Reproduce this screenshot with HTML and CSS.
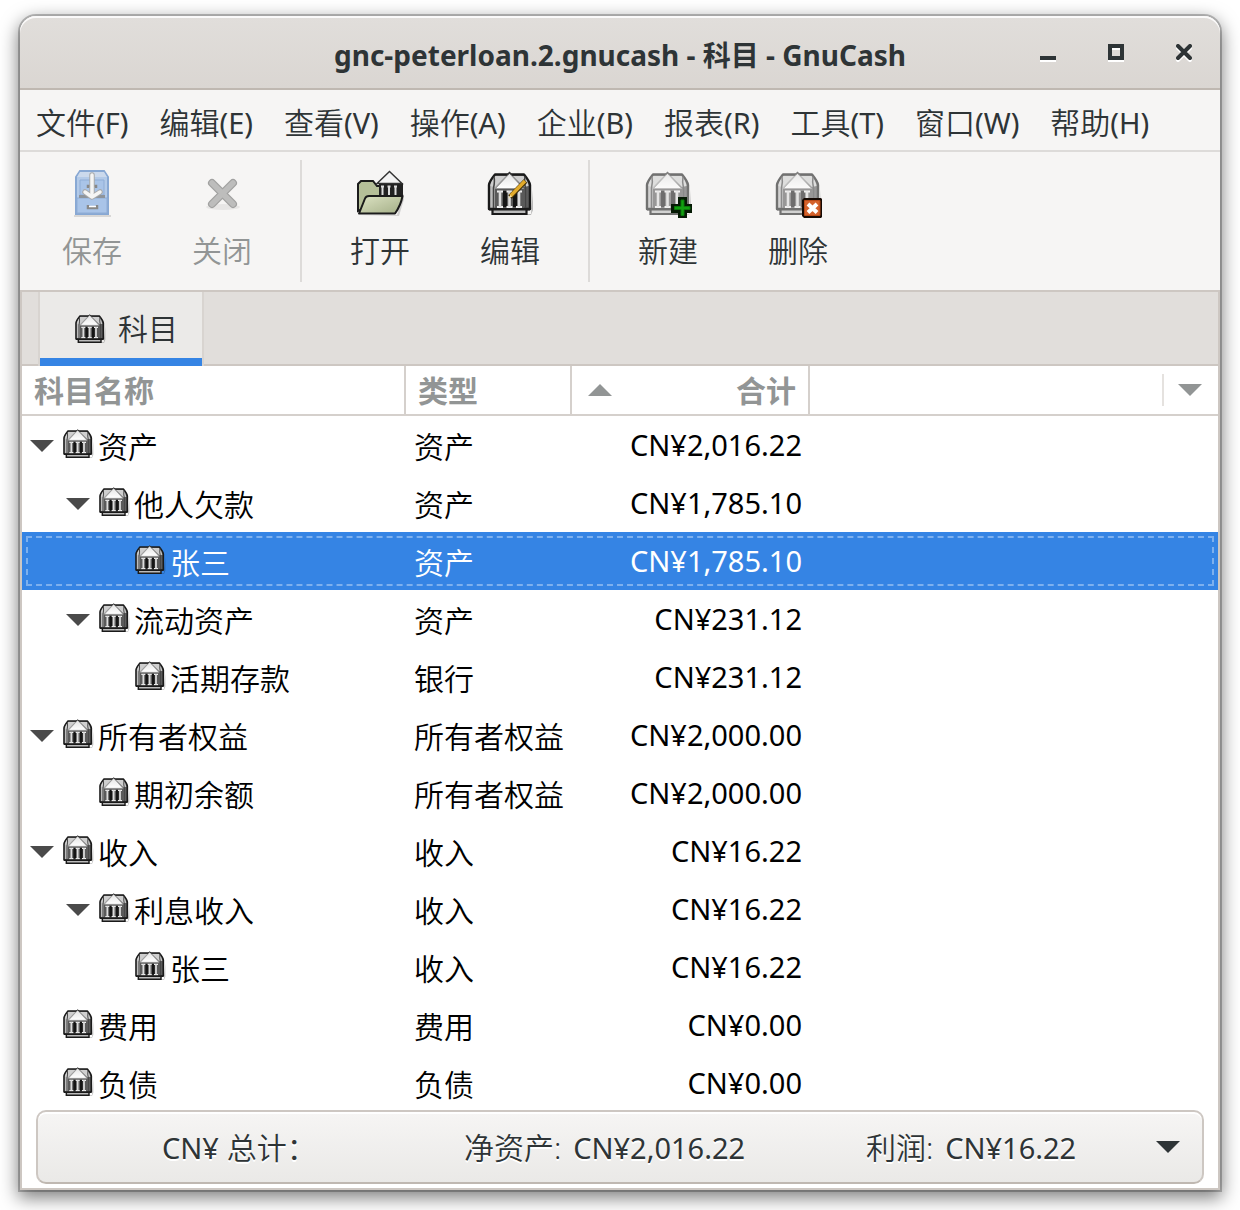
FILE: index.html
```html
<!DOCTYPE html>
<html lang="zh-CN">
<head>
<meta charset="utf-8">
<title>gnc-peterloan.2.gnucash - 科目 - GnuCash</title>
<link rel="stylesheet" href="styles.css">
</head>
<body>
<svg class="defs" aria-hidden="true">
  <defs>
    <linearGradient id="steel" x1="0" x2="1" y1="0" y2="0">
      <stop offset="0" stop-color="#c8c8c8"/><stop offset=".3" stop-color="#8a8a8a"/><stop offset="1" stop-color="#585858"/>
    </linearGradient>
    <linearGradient id="roof" x1="0" x2="0" y1="0" y2="1">
      <stop offset="0" stop-color="#e4e4e4"/><stop offset="1" stop-color="#fff"/>
    </linearGradient>
    <linearGradient id="folder" x1="0" x2="1" y1="0" y2="1">
      <stop offset="0" stop-color="#dde3c4"/><stop offset="1" stop-color="#a3ae86"/>
    </linearGradient>
    <symbol id="bank" viewBox="0 0 48 48">
      <path d="M4 45h41l2-5v-20l-2 24z" fill="#000" opacity=".25"/>
      <path d="M3 39V15Q3 12 9 4.500H38Q44 12 44 15V39z" fill="url(#steel)" stroke="#1a1a1a" stroke-width="2.400" stroke-linejoin="round"/>
      <path d="M9.500 6Q5 11 4.500 16L9 17 20 6zM37.500 6Q42 11 42.500 16L38 17 27 6z" fill="#cfcfcf"/>
      <path d="M8 6.500Q9 12 7.500 18V38M39 6.500Q38 12 39.500 18V38" fill="none" stroke="#444" stroke-width="1.500"/>
      <path d="M9 18H38V38H9z" fill="#5a5a5a"/>
      <path d="M17 21h4v16h-4zM27 21h4v16h-4z" fill="#141414"/>
      <path d="M9.500 18.500 23.500 3.500 37.500 18.500z" fill="url(#roof)" stroke="#999" stroke-width="1"/>
      <path d="M11 21.500h6M20.500 21.500h6M30 21.500h6M11 37h6M20.500 37h6M30 37h6" stroke="#f0f0f0" stroke-width="1.800"/>
      <path d="M14 21v16M23.500 21v16M33 21v16" stroke="#dcdcdc" stroke-width="2.600"/>
      <path d="M3 39.500H44M6.500 40v4H40.500V40" fill="#bbb" stroke="#1a1a1a" stroke-width="2.200"/>
      <path d="M21 5 23.500 2.500 26 5" fill="none" stroke="#333" stroke-width="1.500"/>
    </symbol>
  </defs>
</svg>

<main class="window">
  <header class="titlebar">
    <h1>gnc-peterloan.2.gnucash - 科目 - GnuCash</h1>
    <div class="controls">
      <button type="button" aria-label="最小化"><svg viewBox="0 0 16 18"><path d="M0 14h16v4H0z" fill="#fff"/><path d="M0 12h16v4H0z" fill="#2e3436"/></svg></button>
      <button type="button" aria-label="最大化"><svg viewBox="0 0 16 18"><path d="M2 4h12v12H2z" fill="none" stroke="#fff" stroke-width="4"/><path d="M2 2h12v12H2z" fill="none" stroke="#2e3436" stroke-width="4"/></svg></button>
      <button type="button" aria-label="关闭窗口"><svg viewBox="0 0 16 18"><path d="M2 4l12 12M14 4L2 16" stroke="#fff" stroke-width="4" stroke-linecap="square"/><path d="M2 2l12 12M14 2L2 14" stroke="#2e3436" stroke-width="4" stroke-linecap="round"/></svg></button>
    </div>
  </header>

  <nav class="menubar">
    <button type="button">文件<span class="latin">(F)</span></button>
    <button type="button">编辑<span class="latin">(E)</span></button>
    <button type="button">查看<span class="latin">(V)</span></button>
    <button type="button">操作<span class="latin">(A)</span></button>
    <button type="button">企业<span class="latin">(B)</span></button>
    <button type="button">报表<span class="latin">(R)</span></button>
    <button type="button">工具<span class="latin">(T)</span></button>
    <button type="button">窗口<span class="latin">(W)</span></button>
    <button type="button">帮助<span class="latin">(H)</span></button>
  </nav>

  <div class="toolbar" role="toolbar">
    <button type="button" disabled>
      <svg viewBox="0 0 48 48">
        <path d="M6 45h37v2H6z" fill="#000" opacity=".12"/>
        <path d="M8 7l4-6h24l4 6v37H8z" fill="#b3cae8" stroke="#88a8d3" stroke-width="2"/>
        <path d="M9 7l3-5h24l3 5z" fill="#cbd9ec"/>
        <path d="M12 10h24v15H12zM9 28h30v15H9z" fill="#a9c4e8" stroke="#8fadd6"/>
        <path d="M11 25h26v3H11z" fill="#8e949b"/>
        <path d="M20 18v-2h8v2M20 35v3h9v-3" fill="none" stroke="#888" stroke-width="2.500"/>
        <path d="M21 36.500h7" stroke="#fff" stroke-width="1.500"/>
        <path d="M24 5v18M17 22l7 5 8-5" fill="none" stroke="#a9aaab" stroke-width="5.500" stroke-linecap="round" stroke-linejoin="round"/>
        <path d="M24 5v18M17 22l7 5 8-5" fill="none" stroke="#f5f5f4" stroke-width="3.500" stroke-linecap="round" stroke-linejoin="round"/>
      </svg>
      <span>保存</span>
    </button>
    <button type="button" disabled>
      <svg viewBox="0 0 48 48">
        <ellipse cx="25" cy="37" rx="17" ry="3" fill="#000" opacity=".06"/>
        <path d="M14 13l21 21M35 13L14 34" stroke="#a1a1a0" stroke-width="8" stroke-linecap="round"/>
        <path d="M14 13l21 21M35 13L14 34" stroke="#bdbdbc" stroke-width="5.500" stroke-linecap="round"/>
      </svg>
      <span>关闭</span>
    </button>
    <hr>
    <button type="button">
      <svg viewBox="0 0 48 48">
        <path d="M3 45h38l6-19v-2l2 2-6 20z" fill="#000" opacity=".15"/>
        <path d="M2 41V14l3-3h12l4 5h5v15z" fill="#b5bf98" stroke="#1b1b1b" stroke-width="2"/>
        <path d="M23 13h24v15H23z" fill="#222"/>
        <path d="M21 13.500 33.500 1.500 46 13.500z" fill="#f4f4f4" stroke="#333" stroke-width="1.500"/>
        <path d="M26.500 16v9M33 16v9M39.500 16v9M25 16.500h3M31.500 16.500h3M38 16.500h3" stroke="#ddd" stroke-width="2"/>
        <path d="M3 43.500 9 28.500Q10 26 13 26H46.500Q45 35 39 43.500z" fill="url(#folder)" stroke="#1b1b1b" stroke-width="2" stroke-linejoin="round"/>
      </svg>
      <span>打开</span>
    </button>
    <button type="button">
      <svg viewBox="0 0 48 48">
        <use href="#bank" width="48" height="48"/>
        <path d="M24 27 39.500 11" stroke="#3b2b08" stroke-width="5"/>
        <path d="M24.500 26 39 11" stroke="#e2ab2c" stroke-width="3.500"/>
        <path d="M22 28.500l2.500-3.500 1.500 1.500z" fill="#fbe3a0"/>
      </svg>
      <span>编辑</span>
    </button>
    <hr>
    <button type="button">
      <svg viewBox="0 0 48 48">
        <use href="#bank" width="48" height="48" opacity=".6"/>
        <path d="M34 27h9v7h6v9h-6v6h-9v-6h-7v-9h7z" fill="#051a04"/>
        <path d="M37 30h3v6.500h6v3h-6v6h-3v-6h-6.500v-3H37z" fill="#12a010" stroke="#0a7a0a"/>
      </svg>
      <span>新建</span>
    </button>
    <button type="button">
      <svg viewBox="0 0 48 48">
        <use href="#bank" width="48" height="48" opacity=".6"/>
        <path d="M28 30l2-2h17l2 2v16l-2 2H30l-2-2z" fill="#160a04"/>
        <path d="M30.500 30.500h15.500v15H30.500z" fill="#d4622c" stroke="#b84a17"/>
        <path d="M34 34l9 8.500M43 34l-9 8.500" stroke="#fff" stroke-width="4"/>
      </svg>
      <span>删除</span>
    </button>
  </div>

  <section class="notebook">
    <div class="tabs" role="tablist">
      <button type="button" class="tab" role="tab" aria-selected="true"><svg class="bank"><use href="#bank"/></svg><span>科目</span></button>
    </div>

    <table class="tree">
      <colgroup><col class="c-name"><col class="c-type"><col class="c-total"><col></colgroup>
      <thead>
        <tr>
          <th scope="col">科目名称</th>
          <th scope="col">类型</th>
          <th scope="col"><div class="sorted"><svg class="arrow" viewBox="0 0 24 12"><path d="M0 12 12 0 24 12z"/></svg><span>合计</span></div></th>
          <th class="more"><button type="button" aria-label="选择列"><svg class="arrow" viewBox="0 0 24 12"><path d="M0 0h24L12 12z"/></svg></button></th>
        </tr>
      </thead>
      <tbody>
        <tr><td><div class="account"><svg class="arrow" viewBox="0 0 24 12"><path d="M0 0h24L12 12z"/></svg><svg class="bank"><use href="#bank"/></svg><span>资产</span></div></td><td>资产</td><td class="num">CN¥2,016.22</td><td></td></tr>
        <tr><td><div class="account level-1"><svg class="arrow" viewBox="0 0 24 12"><path d="M0 0h24L12 12z"/></svg><svg class="bank"><use href="#bank"/></svg><span>他人欠款</span></div></td><td>资产</td><td class="num">CN¥1,785.10</td><td></td></tr>
        <tr class="selected"><td><div class="account level-2"><i class="arrow"></i><svg class="bank"><use href="#bank"/></svg><span>张三</span></div></td><td>资产</td><td class="num">CN¥1,785.10</td><td></td></tr>
        <tr><td><div class="account level-1"><svg class="arrow" viewBox="0 0 24 12"><path d="M0 0h24L12 12z"/></svg><svg class="bank"><use href="#bank"/></svg><span>流动资产</span></div></td><td>资产</td><td class="num">CN¥231.12</td><td></td></tr>
        <tr><td><div class="account level-2"><i class="arrow"></i><svg class="bank"><use href="#bank"/></svg><span>活期存款</span></div></td><td>银行</td><td class="num">CN¥231.12</td><td></td></tr>
        <tr><td><div class="account"><svg class="arrow" viewBox="0 0 24 12"><path d="M0 0h24L12 12z"/></svg><svg class="bank"><use href="#bank"/></svg><span>所有者权益</span></div></td><td>所有者权益</td><td class="num">CN¥2,000.00</td><td></td></tr>
        <tr><td><div class="account level-1"><i class="arrow"></i><svg class="bank"><use href="#bank"/></svg><span>期初余额</span></div></td><td>所有者权益</td><td class="num">CN¥2,000.00</td><td></td></tr>
        <tr><td><div class="account"><svg class="arrow" viewBox="0 0 24 12"><path d="M0 0h24L12 12z"/></svg><svg class="bank"><use href="#bank"/></svg><span>收入</span></div></td><td>收入</td><td class="num">CN¥16.22</td><td></td></tr>
        <tr><td><div class="account level-1"><svg class="arrow" viewBox="0 0 24 12"><path d="M0 0h24L12 12z"/></svg><svg class="bank"><use href="#bank"/></svg><span>利息收入</span></div></td><td>收入</td><td class="num">CN¥16.22</td><td></td></tr>
        <tr><td><div class="account level-2"><i class="arrow"></i><svg class="bank"><use href="#bank"/></svg><span>张三</span></div></td><td>收入</td><td class="num">CN¥16.22</td><td></td></tr>
        <tr><td><div class="account"><i class="arrow"></i><svg class="bank"><use href="#bank"/></svg><span>费用</span></div></td><td>费用</td><td class="num">CN¥0.00</td><td></td></tr>
        <tr><td><div class="account"><i class="arrow"></i><svg class="bank"><use href="#bank"/></svg><span>负债</span></div></td><td>负债</td><td class="num">CN¥0.00</td><td></td></tr>
      </tbody>
    </table>

    <button type="button" class="summary">
      <span><span class="latin">CN¥</span> 总计：</span>
      <span>净资产: <span class="latin amount">CN¥2,016.22</span></span>
      <span>利润: <span class="latin amount">CN¥16.22</span></span>
      <svg class="arrow" viewBox="0 0 24 12"><path d="M0 0h24L12 12z"/></svg>
    </button>
  </section>
</main>
</body>
</html>
```
FILE: styles.css
```css
* { box-sizing: border-box; }

body {
  margin: 0;
  min-height: 100vh;
  padding: 16px 20px 20px;
  display: flex;
  background: #fff;
  color: #2e3436;
  font: 350 30px/40px "Noto Sans", "Noto Sans CJK SC", sans-serif;
}

button {
  margin: 0;
  padding: 0;
  border: 0;
  background: none;
  color: inherit;
  font: inherit;
}

svg { display: block; }
.defs { position: absolute; width: 0; height: 0; }

.window {
  flex: 1;
  min-width: 0;
  display: flex;
  flex-direction: column;
  background: #f6f5f4;
  border-radius: 16px 16px 0 0;
  box-shadow: 0 6px 18px 2px rgba(0, 0, 0, .5), 0 0 0 2px rgba(0, 0, 0, .23);
}

/* Title bar */
.titlebar {
  display: grid;
  grid-template-columns: 1fr auto 1fr;
  align-items: center;
  height: 74px;
  padding: 2px 28px 0;
  border-bottom: 2px solid #bfb8b1;
  border-radius: 16px 16px 0 0;
  background: linear-gradient(#e1dedb, #dad6d2);
  box-shadow: inset 0 2px #fbfafa;
}
.titlebar h1 {
  grid-column: 2;
  margin: 0;
  padding-top: 4px;
  font-size: 28px;
  font-weight: 700;
}
.controls { display: flex; gap: 52px; justify-content: flex-end; }
.controls svg { width: 16px; height: 18px; }

/* Menu bar */
.menubar {
  display: flex;
  gap: 31px;
  padding: 13px 16px 7px;
  border-bottom: 2px solid #dddbd9;
  white-space: nowrap;
}

/* Toolbar */
.toolbar {
  display: flex;
  height: 140px;
  padding: 8px 7px;
  border-bottom: 2px solid #cdc7c2;
}
.toolbar button {
  width: 130px;
  padding-top: 10px;
  display: flex;
  flex-direction: column;
  align-items: center;
  gap: 13px;
}
.toolbar svg { width: 48px; height: 48px; }
.toolbar button:disabled { color: #929595; }
.toolbar hr { width: 2px; margin: 0 13px; border: 0; background: #dddbd9; }

/* Notebook */
.notebook {
  flex: 1;
  display: flex;
  flex-direction: column;
  padding-bottom: 4px;
  border: 2px solid #cdc7c2;
  border-top: 0;
  background: #fff;
}
.tabs {
  height: 74px;
  padding: 0 16px;
  display: flex;
  background: linear-gradient(#cdc7c2, #cdc7c2) bottom / 100% 2px no-repeat #e1dedb;
}
.tab {
  display: flex;
  align-items: center;
  gap: 12px;
  padding: 0 24px 0 34px;
  border: 2px solid #d8d4d0;
  border-width: 0 2px;
  background: #ebeae8;
  box-shadow: inset 0 -8px #3584e4;
}
.bank { width: 32px; height: 32px; flex: none; }
.arrow { width: 24px; height: 12px; flex: none; fill: currentColor; }

/* Account tree */
.tree {
  width: 100%;
  table-layout: fixed;
  border-collapse: collapse;
  color: #000;
}
.c-name { width: 384px; }
.c-type { width: 166px; }
.c-total { width: 238px; }
.tree th {
  height: 50px;
  padding: 0 12px;
  background: linear-gradient(#d5d0cc, #d5d0cc) right / 2px 100% no-repeat, linear-gradient(#d5d0cc, #d5d0cc) bottom / 100% 2px no-repeat;
  color: #929595;
  font-weight: 700;
  text-align: left;
}
.tree th.more { padding: 0; background: linear-gradient(#d5d0cc, #d5d0cc) bottom / 100% 2px no-repeat; }
.sorted { display: flex; align-items: center; justify-content: space-between; padding: 0 2px 0 4px; }
.sorted .arrow { margin-bottom: 2px; }
.more button {
  display: block;
  margin: 0 0 2px auto;
  padding: 10px 16px 10px 14px;
  border-left: 2px solid #e5e2df;
}
.tree td { height: 58px; padding: 4px 8px 0; white-space: nowrap; }
.tree .num { padding-top: 0; text-align: right; }
.num, .latin { font-size: 29px; line-height: 38px; font-weight: 400; }
.amount { margin-left: 4px; }
.account { display: flex; align-items: center; }
.account .arrow { margin: 0 8px 2px 0; color: #4a4a4a; }
.account .bank { margin: 0 4px 6px 0; }
.level-1 { padding-left: 36px; }
.level-2 { padding-left: 72px; }
.selected {
  background: #3584e4;
  color: #fff;
  outline: 2px dashed #7db0ee;
  outline-offset: -6px;
}

/* Totals */
.summary {
  position: relative;
  display: grid;
  grid-template-columns: 302fr 402fr 290fr 24px;
  align-items: center;
  height: 74px;
  margin: -2px 14px 0;
  padding: 0 22px 0 124px;
  border: 2px solid #cdc7c2;
  border-bottom-color: #bfb8b1;
  border-radius: 10px;
  background: linear-gradient(#f6f5f4, #eae9e7);
  box-shadow: inset 0 2px #fff;
  text-align: left;
  text-shadow: 0 2px #fff;
  white-space: nowrap;
}
.summary > span { padding-top: 2px; }
```
